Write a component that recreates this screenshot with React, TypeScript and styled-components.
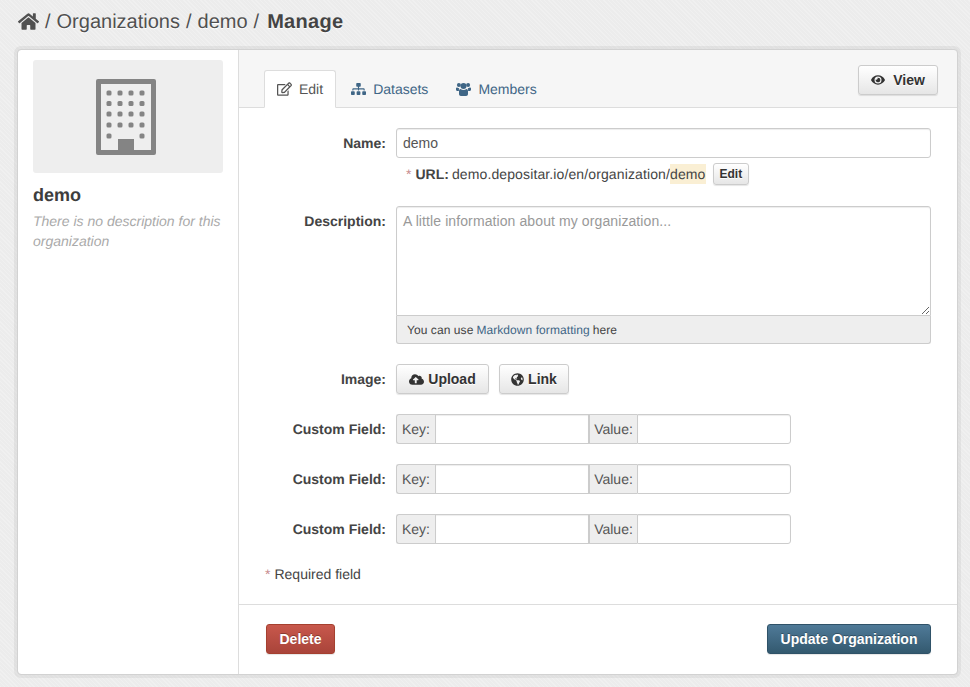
import styled, { createGlobalStyle } from "styled-components";
import { FaHome, FaRegEdit, FaSitemap, FaEye, FaCloudUploadAlt, FaGlobeAmericas } from "react-icons/fa";

const GlobalStyle = createGlobalStyle`
  html, body {
    margin: 0;
    padding: 0;
    background-color: #ececec;
    background-image: repeating-linear-gradient(45deg, rgba(255, 255, 255, 0.22) 0 1px, transparent 1px 3px);
  }
  body {
    font-family: "Liberation Sans", Arial, sans-serif;
    font-size: 14px;
    line-height: 20px;
    color: #444;
    text-rendering: geometricPrecision;
    -webkit-font-smoothing: antialiased;
  }
  * {
    box-sizing: border-box;
  }
`

const Page = styled.div`
  width: 970px;
  height: 687px;
  padding: 0 13px 0 18px;
  overflow: hidden;
`

const Breadcrumb = styled.div`
  height: 50px;
  padding-top: 9px;
  padding-bottom: 15px;
  display: flex;
  align-items: center;
  gap: 6px;
  font-size: 20px;
  line-height: 28px;
  color: #505050;
  text-shadow: 0 1px 0 #fff;

  strong {
    margin-left: 2px;
    letter-spacing: 0.3px;
    color: #444;
  }

  svg {
    color: #505050;
    width: 21px;
    height: 19px;
    margin-top: -2px;
  }
`

const Wrapper = styled.div`
  display: flex;
  height: 624px;
  background: #fff;
  border-radius: 3px;
  box-shadow: 0 0 0 4px rgba(0, 0, 0, 0.05);
  outline: 1px solid #d2d2d2;
`

const Sidebar = styled.aside`
  width: 221px;
  flex-shrink: 0;
  padding: 10px 15px 0;
  border-right: 1px solid #ddd;
`

const LogoBox = styled.div`
  width: 190px;
  height: 113px;
  padding-right: 4px;
  background: #eee;
  border-radius: 3px;
  display: flex;
  align-items: center;
  justify-content: center;
`

const OrgName = styled.h1`
  margin: 11px 0 0;
  font-size: 18px;
  line-height: 22px;
  font-weight: 700;
  color: #3d3d3d;
`

const OrgDescription = styled.p`
  margin: 5px 0 0;
  font-size: 14px;
  line-height: 20px;
  font-style: italic;
  color: #aaa;
`

const Main = styled.main`
  flex: 1;
  display: flex;
  flex-direction: column;
  min-width: 0;
`

const TabBar = styled.div`
  height: 58px;
  background: #f6f6f6;
  border-bottom: 1px solid #ddd;
  border-radius: 0 3px 0 0;
  padding: 0 19px 0 25px;
  display: flex;
  justify-content: space-between;
  align-items: flex-start;
`

const Tabs = styled.div`
  display: flex;
  align-self: flex-end;
  margin-bottom: -1px;
`

const Tab = styled.a<{ $active?: boolean }>`
  height: 38px;
  display: flex;
  align-items: center;
  gap: 7px;
  padding: 0 12px;
  margin-right: 2px;
  font-size: 14px;
  color: ${(p) => (p.$active ? "#555" : "#3f6686")};
  background: ${(p) => (p.$active ? "#fff" : "transparent")};
  border: 1px solid ${(p) => (p.$active ? "#ddd" : "transparent")};
  border-bottom-color: ${(p) => (p.$active ? "#fff" : "transparent")};
  border-radius: 3px 3px 0 0;

  svg {
    width: 15px;
    height: 14px;
  }
`

const Button = styled.button`
  display: inline-flex;
  align-items: center;
  justify-content: center;
  gap: 4px;
  height: 30px;
  padding: 0 12px;
  font-family: inherit;
  font-size: 14px;
  font-weight: 700;
  color: #333;
  text-shadow: 0 1px 0 #fff;
  background: linear-gradient(#fff, #e6e6e6);
  border: 1px solid #ccc;
  border-radius: 3px;
  box-shadow: 0 1px 1px rgba(0, 0, 0, 0.1);
`

const ViewButton = styled(Button)`
  width: 80px;
  margin-top: 15px;
  gap: 8px;
`

const UploadButton = styled(Button)`
  width: 93px;
  padding: 0;

  svg {
    width: 15px;
    height: 15px;
  }
`

const LinkButton = styled(Button)`
  width: 70px;
  padding: 0;
  gap: 4px;

  svg {
    width: 13px;
    height: 13px;
  }
`

const SmallButton = styled(Button)`
  height: 22px;
  padding: 0 6px;
  font-size: 12px;
  margin-left: 7px;
`

const Form = styled.form`
  flex: 1;
  display: flex;
  flex-direction: column;
  margin: 0;
`

const Fields = styled.div`
  flex: 1;
  padding: 20px 26px 0 26px;
`

const Row = styled.div<{ $gap?: number }>`
  display: grid;
  grid-template-columns: 121px 535px;
  column-gap: 10px;
  margin-bottom: ${(p) => p.$gap ?? 20}px;
`

const Label = styled.label`
  font-weight: 700;
  text-align: right;
  line-height: 30px;
  color: #444;
`

const TextInput = styled.input`
  display: block;
  width: 100%;
  height: 30px;
  padding: 4px 6px;
  font-family: inherit;
  font-size: 14px;
  color: #555;
  border: 1px solid #ccc;
  border-radius: 3px;
  box-shadow: inset 0 1px 1px rgba(0, 0, 0, 0.075);
`

const UrlLine = styled.div`
  display: flex;
  align-items: center;
  height: 22px;
  margin-top: 5px;
  padding-left: 10px;
  color: #444;
`

const Star = styled.span`
  color: #c6898b;
  margin-right: 4px;
`

const UrlLabel = styled.strong`
  margin-right: 3px;
`

const UrlText = styled.span`
  display: flex;
  letter-spacing: 0.12px;
`

const Highlight = styled.span`
  background: #faefd4;
`

const MarkdownBox = styled.div`
  width: 535px;
`

const TextArea = styled.textarea`
  display: block;
  width: 100%;
  height: 110px;
  padding: 4px 6px;
  font-family: inherit;
  font-size: 14px;
  line-height: 20px;
  letter-spacing: 0.1px;
  color: #555;
  border: 1px solid #ccc;
  border-radius: 3px 3px 0 0;
  box-shadow: inset 0 1px 1px rgba(0, 0, 0, 0.075);

  &::placeholder {
    color: #999;
    opacity: 1;
  }
`

const EditorInfo = styled.div`
  height: 28px;
  padding: 0 10px;
  display: flex;
  align-items: center;
  gap: 3px;
  font-size: 12px;
  letter-spacing: 0.07px;
  color: #444;
  background: #eee;
  border: 1px solid #ccc;
  border-top: 0;
  border-radius: 0 0 3px 3px;

  a {
    color: #3f6686;
  }
`

const ImageButtons = styled.div`
  display: flex;
  gap: 10px;
`

const InputGroup = styled.div`
  display: flex;
  width: 395px;
`

const AddOn = styled.span<{ $w: number; $first?: boolean }>`
  width: ${(p) => p.$w}px;
  height: 30px;
  flex-shrink: 0;
  display: flex;
  align-items: center;
  justify-content: center;
  font-size: 14px;
  color: #555;
  background: #eee;
  border: 1px solid #ccc;
  border-right: 0;
  border-radius: ${(p) => (p.$first ? "3px 0 0 3px" : "0")};
`

const GroupInput = styled.input<{ $last?: boolean }>`
  width: 154px;
  height: 30px;
  padding: 4px 6px;
  border: 1px solid #ccc;
  border-radius: ${(p) => (p.$last ? "0 3px 3px 0" : "0")};
  box-shadow: inset 0 1px 1px rgba(0, 0, 0, 0.075);
`

const Required = styled.p`
  margin: 0;
  line-height: 20px;
  color: #444;
`

const Actions = styled.div`
  height: 70px;
  padding: 0 26px 2px 27px;
  border-top: 1px solid #ddd;
  display: flex;
  align-items: center;
  justify-content: space-between;
`

const DangerButton = styled(Button)`
  width: 69px;
  padding: 0;
  color: #fff;
  text-shadow: 0 -1px 0 rgba(0, 0, 0, 0.3);
  background: linear-gradient(#c8584c, #a9443a);
  border-color: #a5402f;
`

const PrimaryButton = styled(Button)`
  width: 164px;
  padding: 0;
  color: #fff;
  text-shadow: 0 -1px 0 rgba(0, 0, 0, 0.3);
  background: linear-gradient(#4f7a98, #33596f);
  border-color: #2f5268;
`

const BuildingIcon = () => {
  const windows: [number, number][] = []
  for (const y of [14, 24.5, 35, 46]) {
    for (const x of [13, 24, 35, 46]) windows.push([x, y])
  }
  windows.push([13, 57], [46, 57])

  return (
    <svg width="60" height="76" viewBox="0 0 60 76" fill="#848484" aria-hidden="true">
      <path fillRule="evenodd" d="M2 0h56a2 2 0 0 1 2 2v72a2 2 0 0 1-2 2H2a2 2 0 0 1-2-2V2a2 2 0 0 1 2-2zM5 5v66h50V5z" />
      {windows.map(([x, y]) => (
        <rect key={`${x}-${y}`} x={x - 2.5} y={y - 2.5} width="5" height="5" rx="1.5" />
      ))}
      <rect x="22" y="60" width="16" height="14" />
    </svg>
  )
}

// the package's users icon is too flat, this one is closer to the taller glyph in the picture
const UsersIcon = () => (
  <svg viewBox="0 0 15 14" fill="currentColor" aria-hidden="true">
    <circle cx="2.9" cy="3" r="2" />
    <circle cx="12.1" cy="3" r="2" />
    <circle cx="7.5" cy="4" r="3" />
    <path d="M0 6.6C0 5.8.5 5.5 1.2 5.5c.6.5 1.2.8 2 .8-.4.9-.3 1.800-.3 2.600H1.200C.5 8.900 0 8.500 0 7.800z" />
    <path d="M15 6.600c0-.8-.5-1.100-1.200-1.100-.6.5-1.200.8-2 .8.4.9.3 1.800.3 2.600h1.700c.7 0 1.200-.4 1.200-1.100z" />
    <path d="M4.600 7c.8.700 1.800 1.100 2.900 1.100S9.600 7.700 10.400 7c1 0 1.600.7 1.600 2.400v2.600c0 1.200-.8 2-1.900 2H4.900C3.800 14 3 13.200 3 12V9.400C3 7.700 3.600 7 4.600 7z" />
  </svg>
)

const CustomFieldRow = () => (
  <Row>
    <Label>Custom Field:</Label>
    <InputGroup>
      <AddOn $w={39} $first>Key:</AddOn>
      <GroupInput />
      <AddOn $w={48}>Value:</AddOn>
      <GroupInput $last />
    </InputGroup>
  </Row>
)

export default function App() {
  return (
    <Page>
      <GlobalStyle />
      <Breadcrumb>
        <FaHome />
        <span>/</span>
        <span>Organizations</span>
        <span>/</span>
        <span>demo</span>
        <span>/</span>
        <strong>Manage</strong>
      </Breadcrumb>
      <Wrapper>
        <Sidebar>
          <LogoBox>
            <BuildingIcon />
          </LogoBox>
          <OrgName>demo</OrgName>
          <OrgDescription>There is no description for this organization</OrgDescription>
        </Sidebar>
        <Main>
          <TabBar>
            <Tabs>
              <Tab $active><FaRegEdit />Edit</Tab>
              <Tab><FaSitemap />Datasets</Tab>
              <Tab><UsersIcon />Members</Tab>
            </Tabs>
            <ViewButton type="button"><FaEye />View</ViewButton>
          </TabBar>
          <Form>
            <Fields>
              <Row $gap={21}>
                <Label>Name:</Label>
                <div>
                  <TextInput defaultValue="demo" />
                  <UrlLine>
                    <Star>*</Star>
                    <UrlLabel>URL:</UrlLabel>
                    <UrlText>
                      demo.depositar.io/en/organization/
                      <Highlight>demo</Highlight>
                    </UrlText>
                    <SmallButton type="button">Edit</SmallButton>
                  </UrlLine>
                </div>
              </Row>
              <Row>
                <Label>Description:</Label>
                <MarkdownBox>
                  <TextArea placeholder="A little information about my organization..." />
                  <EditorInfo>You can use <a>Markdown formatting</a> here</EditorInfo>
                </MarkdownBox>
              </Row>
              <Row>
                <Label>Image:</Label>
                <ImageButtons>
                  <UploadButton type="button"><FaCloudUploadAlt />Upload</UploadButton>
                  <LinkButton type="button"><FaGlobeAmericas />Link</LinkButton>
                </ImageButtons>
              </Row>
              <CustomFieldRow />
              <CustomFieldRow />
              <CustomFieldRow />
              <Required><Star>*</Star>Required field</Required>
            </Fields>
            <Actions>
              <DangerButton type="button">Delete</DangerButton>
              <PrimaryButton type="button">Update Organization</PrimaryButton>
            </Actions>
          </Form>
        </Main>
      </Wrapper>
    </Page>
  )
}
